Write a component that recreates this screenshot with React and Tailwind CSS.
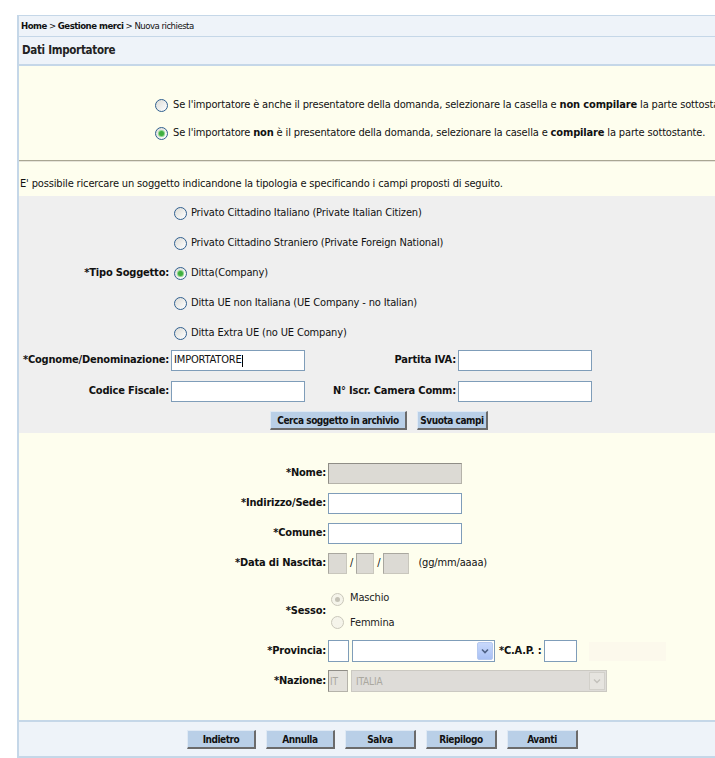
import React from "react";

function Radio({ checked, disabled }) {
  if (disabled) {
    return (
      <span className="inline-flex w-[13px] h-[13px] shrink-0 items-center justify-center rounded-full border border-[#cac8bb] bg-[#f5f4ea]">
        {checked && <span className="w-[5px] h-[5px] rounded-full bg-[#c4c2b6]" />}
      </span>
    );
  }
  return (
    <span className="inline-flex w-[13px] h-[13px] shrink-0 items-center justify-center rounded-full border border-[#2f5f8f] bg-gradient-to-br from-[#dcdcd7] to-white">
      {checked && <span className="w-[5px] h-[5px] rounded-full bg-[#3fae3f] ring-1 ring-[#8ed68e]" />}
    </span>
  );
}

function Input({ w, value, disabled, className = "" }) {
  return (
    <div
      className={
        "h-[21px] shrink-0 border px-[2px] flex items-center text-[11px] " +
        (disabled
          ? "bg-[#dcdad4] border-[#b5b3aa] border-t-[#8f8d86] border-l-[#8f8d86] text-[#a8a69e] "
          : "bg-white border-[#7f9db9] ") +
        className
      }
      style={{ width: w }}
    >
      {value}
    </div>
  );
}

function Btn({ children, w }) {
  return (
    <div
      className="h-[19px] flex items-center justify-center whitespace-nowrap bg-[#b9cfe7] border-t border-l border-t-[#dfe9f4] border-l-[#dfe9f4] border-r-2 border-b-2 border-r-[#6b6b6b] border-b-[#6b6b6b] font-bold text-[10px] tracking-[-0.45px] text-[#111]"
      style={{ width: w }}
    >
      {children}
    </div>
  );
}

function Label({ children, w }) {
  return (
    <div className="shrink-0 text-right whitespace-nowrap font-bold text-[11px] tracking-[-0.2px] text-[#111]" style={{ width: w }}>
      {children}
    </div>
  );
}

export default function App() {
  return (
    <div className="w-[715px] h-[758px] overflow-hidden bg-white pt-[15px] pl-[17px] font-['DejaVu_Sans_Condensed','DejaVu_Sans',sans-serif] text-[11px] tracking-[-0.15px] text-[#111]">
      <div className="w-[760px] border-l-2 border-[#c5d7e8] flex flex-col">
        {/* breadcrumb */}
        <div className="h-[22px] bg-[#eef3f9] border-t border-b border-[#c5d7e8] flex items-center pl-[2px] text-[9.5px] tracking-[-0.5px]">
          <span className="font-bold">Home</span>
          <span>&nbsp;&gt;&nbsp;</span>
          <span className="font-bold">Gestione merci</span>
          <span>&nbsp;&gt; Nuova richiesta</span>
        </div>
        <div className="h-[29px] bg-[#eef3f9] border-b-2 border-[#c5d7e8] flex items-center pl-[3px] text-[11.5px] tracking-[-0.3px] font-bold text-[#222]">
          Dati Importatore
        </div>
        {/* top yellow */}
        <div className="bg-[#fefeee] h-[94px] flex flex-col pt-[25px] pl-[136px]">
          <div className="h-[28px] flex items-center gap-[5px] whitespace-nowrap">
            <Radio />
            <span>
              Se l'importatore è anche il presentatore della domanda, selezionare la casella e{" "}
              <b>non compilare</b> la parte sottostante.
            </span>
          </div>
          <div className="h-[28px] flex items-center gap-[5px] whitespace-nowrap">
            <Radio checked />
            <span>
              Se l'importatore <b>non</b> è il presentatore della domanda, selezionare la casella e{" "}
              <b>compilare</b> la parte sottostante.
            </span>
          </div>
        </div>
        <div className="h-[1px] bg-[#a9a693]" />
        <div className="h-[1px] bg-[#e6e4d8]" />
        <div className="bg-[#fefeee] h-[34px] flex items-end pb-[4px] pl-[1px] whitespace-nowrap">
          E' possibile ricercare un soggetto indicandone la tipologia e specificando i campi proposti di seguito.
        </div>
        {/* gray */}
        <div className="bg-[#efefef] h-[237px] flex flex-col pt-[2px]">
          {[
            ["", "Privato Cittadino Italiano (Private Italian Citizen)", false],
            ["", "Privato Cittadino Straniero (Private Foreign National)", false],
            ["*Tipo Soggetto:", "Ditta(Company)", true],
            ["", "Ditta UE non Italiana (UE Company - no Italian)", false],
            ["", "Ditta Extra UE (no UE Company)", false],
          ].map(([lab, txt, ch], i) => (
            <div key={i} className="h-[30px] flex items-center">
              <Label w={150}>{lab}</Label>
              <div className="ml-[5px] flex items-center gap-[4px] whitespace-nowrap">
                <Radio checked={ch} />
                <span>{txt}</span>
              </div>
            </div>
          ))}
          <div className="mt-[2px] flex items-center gap-[2px]">
            <Label w={150}>*Cognome/Denominazione:</Label>
            <Input w={134} value={<span className="flex items-center">IMPORTATORE<span className="w-px h-[12px] bg-black" /></span>} />
            <Label w={149}>Partita IVA:</Label>
            <Input w={134} />
          </div>
          <div className="mt-[10px] flex items-center gap-[2px]">
            <Label w={150}>Codice Fiscale:</Label>
            <Input w={134} />
            <Label w={149}>N° Iscr. Camera Comm:</Label>
            <Input w={134} />
          </div>
          <div className="mt-[9px] flex items-center gap-[10px] pl-[251px]">
            <Btn w={137}>Cerca soggetto in archivio</Btn>
            <Btn w={71}>Svuota campi</Btn>
          </div>
        </div>
        {/* bottom yellow */}
        <div className="bg-[#fefeee] h-[287px] flex flex-col pt-[30px]">
          <div className="flex items-center gap-[2px]">
            <Label w={307}>*Nome:</Label>
            <Input w={134} disabled />
          </div>
          <div className="mt-[9px] flex items-center gap-[2px]">
            <Label w={307}>*Indirizzo/Sede:</Label>
            <Input w={134} />
          </div>
          <div className="mt-[9px] flex items-center gap-[2px]">
            <Label w={307}>*Comune:</Label>
            <Input w={134} />
          </div>
          <div className="mt-[9px] flex items-center gap-[2px]">
            <Label w={307}>*Data di Nascita:</Label>
            <div className="w-[19px] h-[21px] bg-[#dcdad4] border border-[#c9c7bd] border-t-[#a9a79f] border-l-[#a9a79f]" />
            <span className="px-[1px]">/</span>
            <div className="w-[18px] h-[21px] bg-[#dcdad4] border border-[#c9c7bd] border-t-[#a9a79f] border-l-[#a9a79f]" />
            <span className="px-[1px]">/</span>
            <div className="w-[26px] h-[21px] bg-[#dcdad4] border border-[#c9c7bd] border-t-[#a9a79f] border-l-[#a9a79f]" />
            <span className="ml-[7px]">(gg/mm/aaaa)</span>
          </div>
          <div className="mt-[17px] h-[40px] flex items-center gap-[2px]">
            <Label w={307}>*Sesso:</Label>
            <div className="flex flex-col ml-[3px] -mt-[3px]">
              <div className="h-[25px] flex items-start gap-[6px] text-[#222]">
                <span className="mt-[1px]"><Radio checked disabled /></span>
                <span>Maschio</span>
              </div>
              <div className="h-[15px] flex items-start gap-[6px] text-[#222]">
                <span className="mt-[1px]"><Radio disabled /></span>
                <span>Femmina</span>
              </div>
            </div>
          </div>
          <div className="mt-[9px] flex items-center gap-[2px]">
            <Label w={307}>*Provincia:</Label>
            <Input w={21} className="h-[22px]" />
            <div className="ml-[1px] w-[143px] h-[22px] bg-white border border-[#7f9db9] flex justify-end items-stretch p-[1px]">
              <div className="w-[16px] bg-gradient-to-b from-[#c8d9fc] to-[#a9c1f4] border border-[#b6c9f0] rounded-[2px] flex items-center justify-center">
                <svg width="8" height="6" viewBox="0 0 8 6"><path d="M1 1.5 L4 4.5 L7 1.5" stroke="#4d6185" strokeWidth="1.6" fill="none" /></svg>
              </div>
            </div>
            <span className="ml-[2px] font-bold tracking-[-0.2px]">*C.A.P. :</span>
            <Input w={33} className="ml-[1px] h-[22px]" />
            <div className="ml-[10px] w-[77px] h-[19px] bg-[#fcf9ec]" />
          </div>
          <div className="mt-[8px] flex items-center gap-[2px]">
            <Label w={307}>*Nazione:</Label>
            <div className="w-[20px] h-[22px] bg-[#e2e0da] border border-[#b5b3aa] border-t-[#8f8d86] border-l-[#8f8d86] text-[#aaa89f] text-[10px] flex items-center pl-[1px]">IT</div>
            <div className="ml-[1px] w-[256px] h-[22px] bg-[#dedcd8] border border-[#cbc9c2] flex items-center justify-between p-[1px] pl-[4px] text-[#aaa89f] text-[10px]">
              <span>ITALIA</span>
              <div className="w-[16px] h-full bg-[#e6e4df] border border-[#d2d0ca] flex items-center justify-center">
                <svg width="8" height="6" viewBox="0 0 8 6"><path d="M1 1.5 L4 4.5 L7 1.5" stroke="#c3c1bb" strokeWidth="1.4" fill="none" /></svg>
              </div>
            </div>
          </div>
        </div>
        <div className="h-[2px] bg-[#c5d7e8]" />
        <div className="h-[34px] bg-[#eef3f9] flex items-center gap-[10px] pl-[168px] pt-[1px]">
          <Btn w={69}>Indietro</Btn>
          <Btn w={69}>Annulla</Btn>
          <Btn w={71}>Salva</Btn>
          <Btn w={71}>Riepilogo</Btn>
          <Btn w={71}>Avanti</Btn>
        </div>
        <div className="h-[2px] bg-[#c5d7e8]" />
      </div>
    </div>
  );
}
